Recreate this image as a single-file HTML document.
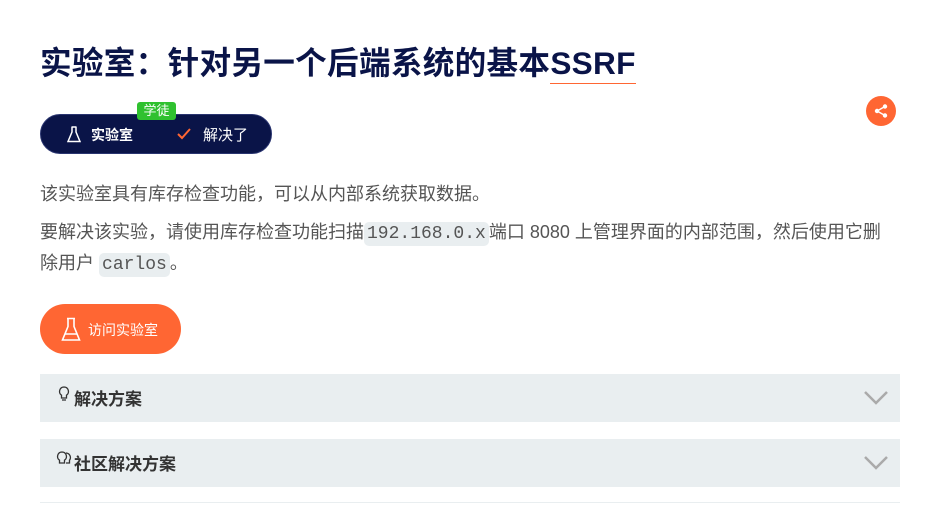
<!DOCTYPE html>
<html><head><meta charset="utf-8"><style>
*{margin:0;padding:0;box-sizing:border-box}
body{width:936px;height:505px;background:#fff;font-family:"Liberation Sans","Noto Sans CJK SC",sans-serif;position:relative;overflow:hidden;color:#333}
.a{position:absolute}
h1{position:absolute;left:40px;top:38px;font-size:31.6px;font-weight:bold;color:#0a1448;white-space:nowrap;letter-spacing:0.3px}
h1 u{text-decoration:none;border-bottom:1px solid #ff6633;padding-bottom:2px}
.pill{left:40px;top:114px;width:232px;height:40px;border-radius:20px;background:#0a1448;border:1px solid #2a3570;color:#fff;font-size:15px}
.badge{left:137px;top:102px;width:39px;height:18px;background:#2fc12f;color:#fff;font-size:13px;border-radius:3px;text-align:center;line-height:18px}
p{position:absolute;left:40px;font-size:18px;color:#555;white-space:nowrap}
code{font-family:"Liberation Mono",monospace;background:#e9eef0;border-radius:5px;padding:2px 3px;font-size:18px;color:#555}
.btn{left:40px;top:304px;width:141px;height:50px;border-radius:25px;background:#ff6633;color:#fff;font-size:14px}
.acc{left:40px;width:860px;height:48px;background:#e9eef0;font-weight:bold;font-size:17px;color:#333}
</style></head><body>
<h1>实验室：针对另一个后端系统的基本<u>SSRF</u></h1>
<div class="a pill">
<svg class="a" style="left:26px;top:11px" width="14" height="17" viewBox="0 0 14 17"><path d="M4.5 1h5M5 1v5L1 15.5h12L9 6V1" fill="none" stroke="#fff" stroke-width="1.5"/></svg>
<span class="a" style="left:50px;top:10px;font-weight:bold;font-size:14px">实验室</span>
<svg class="a" style="left:136px;top:13px" width="14" height="12" viewBox="0 0 14 12"><path d="M1 6l4 4 8-9" fill="none" stroke="#ff6633" stroke-width="2"/></svg>
<span class="a" style="left:162px;top:9px">解决了</span>
</div>
<div class="a badge">学徒</div>
<div class="a" style="left:866px;top:96px;width:30px;height:30px;border-radius:50%;background:#ff6633">
<svg class="a" style="left:7px;top:7px" width="16" height="16" viewBox="0 0 16 16"><circle cx="12" cy="3.5" r="2.2" fill="#fff"/><circle cx="4" cy="8" r="2.2" fill="#fff"/><circle cx="12" cy="12.5" r="2.2" fill="#fff"/><path d="M12 3.5L4 8l8 4.5" stroke="#fff" stroke-width="1.4" fill="none"/></svg></div>
<p style="top:180px">该实验室具有库存检查功能，可以从内部系统获取数据。</p>
<p style="top:218px">要解决该实验，请使用库存检查功能扫描<code>192.168.0.x</code>端口 8080 上管理界面的内部范围，然后使用它删</p>
<p style="top:249px">除用户 <code>carlos</code>。</p>
<div class="a btn">
<svg class="a" style="left:21px;top:13px" width="20" height="25" viewBox="0 0 20 25"><path d="M6 1.5h8M7 1.5v8L1.5 23h17L13 9.5v-8M4 17h12" fill="none" stroke="#fff" stroke-width="1.6"/></svg>
<span class="a" style="left:48px;top:16px">访问实验室</span></div>
<div class="a acc" style="top:374px">
<svg class="a" style="left:18px;top:12px" width="12" height="17" viewBox="0 0 12 17"><path d="M6 1a4.5 4.5 0 0 0-2.5 8.2V12h5V9.2A4.5 4.5 0 0 0 6 1zM4 14h4" fill="none" stroke="#333" stroke-width="1.3"/></svg>
<span class="a" style="left:34px;top:11px">解决方案</span>
<svg class="a" style="left:824px;top:17px" width="24" height="14" viewBox="0 0 24 14"><path d="M1 1l11 11L23 1" fill="none" stroke="#aaa" stroke-width="2.5"/></svg></div>
<div class="a acc" style="top:439px">
<svg class="a" style="left:16px;top:12px" width="18" height="17" viewBox="0 0 18 17"><path d="M6 1a4.5 4.5 0 0 0-2.5 8.2V12h5V9.2A4.5 4.5 0 0 0 6 1zM10 2a4.5 4.5 0 0 1 3.5 7.2V12H10" fill="none" stroke="#333" stroke-width="1.3"/></svg>
<span class="a" style="left:34px;top:11px">社区解决方案</span>
<svg class="a" style="left:824px;top:17px" width="24" height="14" viewBox="0 0 24 14"><path d="M1 1l11 11L23 1" fill="none" stroke="#aaa" stroke-width="2.5"/></svg></div>
<div class="a" style="left:40px;top:502px;width:860px;height:1px;background:#e9eef0"></div>
</body></html>
